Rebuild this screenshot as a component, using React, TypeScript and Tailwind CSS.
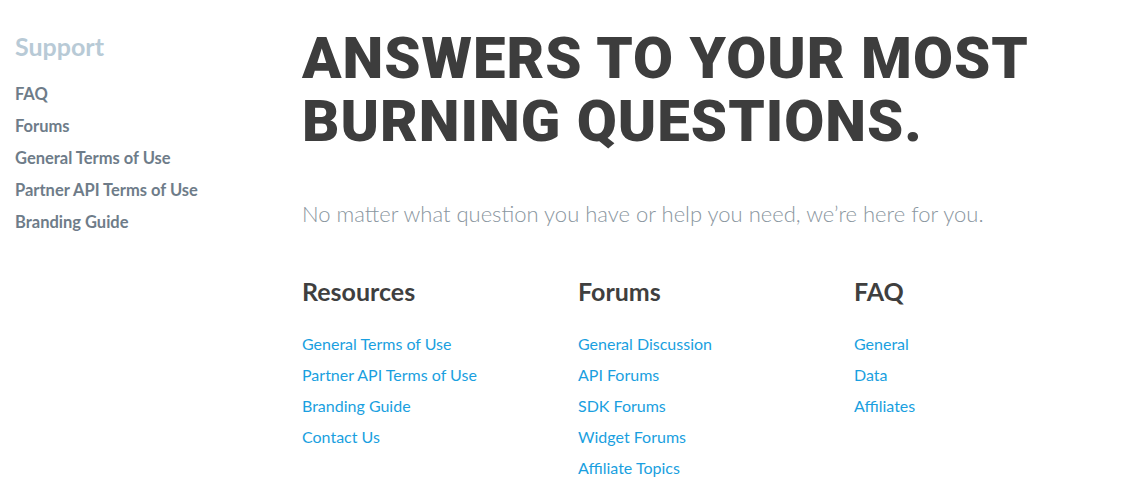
import React from 'react';

const sideLinks = ['FAQ', 'Forums', 'General Terms of Use', 'Partner API Terms of Use', 'Branding Guide'];

const columns: { title: string; links: string[] }[] = [
  {
    title: 'Resources',
    links: ['General Terms of Use', 'Partner API Terms of Use', 'Branding Guide', 'Contact Us'],
  },
  {
    title: 'Forums',
    links: ['General Discussion', 'API Forums', 'SDK Forums', 'Widget Forums', 'Affiliate Topics'],
  },
  {
    title: 'FAQ',
    links: ['General', 'Data', 'Affiliates'],
  },
];

export default function App() {
  return (
    <div className="flex min-h-[504px] bg-white font-['Lato',sans-serif]">
      <aside className="w-[302px] shrink-0 pl-[15px] pt-[29px]">
        <h2 className="text-[25px] font-bold leading-[34px] text-[#b8cad6]">Support</h2>
        <ul className="mt-[15px] flex flex-col">
          {sideLinks.map((l) => (
            <li key={l} className="text-[16.5px] font-bold leading-[32px] text-[#6e7c89]">
              {l}
            </li>
          ))}
        </ul>
      </aside>

      <main className="flex-1 pt-[27px]">
        <h1 className="font-['Roboto',sans-serif] text-[58px] font-black uppercase leading-[63px] tracking-[1px] text-[#3d3d3d]">
          Answers to your most
          <br />
          burning questions.
        </h1>
        <p className="mt-[46px] text-[22px] font-light leading-[30px] text-[#8a96a0]">
          No matter what question you have or help you need, we’re here for you.
        </p>

        <div className="mt-[46px] grid w-[828px] grid-cols-3">
          {columns.map((c) => (
            <section key={c.title}>
              <h3 className="text-[25px] font-bold leading-[32px] text-[#3f3f3f]">{c.title}</h3>
              <ul className="mt-[21px] flex flex-col">
                {c.links.map((l) => (
                  <li key={l} className="text-[16px] leading-[31px] text-[#1a9fe0]">
                    {l}
                  </li>
                ))}
              </ul>
            </section>
          ))}
        </div>
      </main>
    </div>
  );
}
